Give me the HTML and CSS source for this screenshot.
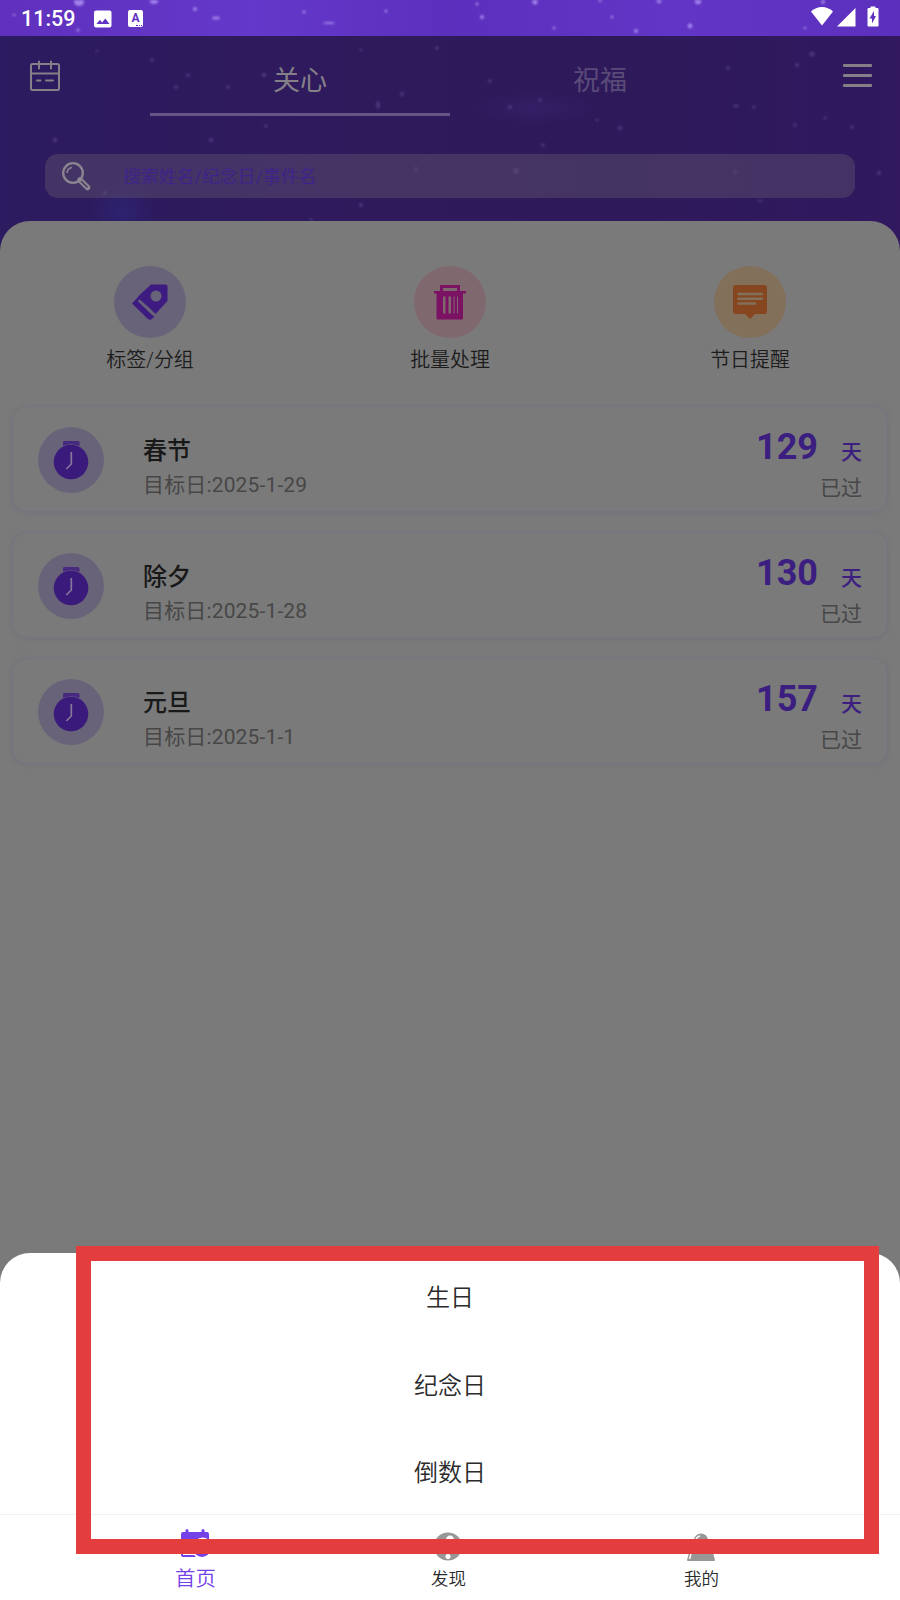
FILE: index.html
```
<!DOCTYPE html>
<html lang="zh-CN">
<head>
<meta charset="utf-8">
<title>首页</title>
<link rel="stylesheet" href="styles.css">
</head>
<body>
<div class="screen">
  <header class="hero">
    <svg class="stars" width="900" height="221" viewBox="0 0 900 221" aria-hidden="true">
      <g class="stars-bright">
        <ellipse cx="79" cy="2" rx="5" ry="4"/><ellipse cx="154" cy="1" rx="4" ry="3"/><circle cx="195" cy="9" r="2"/><ellipse cx="216" cy="18" rx="4" ry="1.6"/><circle cx="78" cy="30" r="1.6"/><circle cx="304" cy="12" r="1.6"/><circle cx="386" cy="11" r="1.6"/><ellipse cx="329" cy="23" rx="6" ry="1"/><circle cx="482" cy="17" r="2"/><circle cx="535" cy="2" r="2.6"/><circle cx="600" cy="0" r="2"/><circle cx="659" cy="1" r="2.4"/><circle cx="698" cy="1" r="3.2"/><circle cx="690" cy="26" r="2.4"/><circle cx="636" cy="31" r="2"/><circle cx="823" cy="2" r="2"/><circle cx="612" cy="17" r="1.4"/><circle cx="554" cy="28" r="1.4"/><circle cx="805" cy="28" r="1.3"/><circle cx="14" cy="15" r="1.3"/><circle cx="477" cy="4" r="1.5"/>
      </g>
      <g class="stars-dim">
        <circle cx="188" cy="75" r="2"/><circle cx="264" cy="75" r="2.4"/><circle cx="176" cy="87" r="2"/><circle cx="228" cy="87" r="2"/><circle cx="152" cy="60" r="2"/><circle cx="97" cy="51" r="1.6"/><circle cx="402" cy="94" r="2.2"/><ellipse cx="378" cy="105" rx="2" ry="4"/><circle cx="55" cy="140" r="2.4"/><circle cx="211" cy="140" r="2.2"/><circle cx="266" cy="126" r="2"/><circle cx="437" cy="48" r="2"/><circle cx="361" cy="50" r="1.6"/><circle cx="490" cy="81" r="2"/><circle cx="510" cy="107" r="2.2"/><circle cx="540" cy="100" r="2"/><circle cx="597" cy="120" r="1.6"/><circle cx="620" cy="128" r="2.2"/><circle cx="543" cy="145" r="2"/><circle cx="812" cy="54" r="2.6"/><circle cx="797" cy="65" r="2.2"/><circle cx="728" cy="68" r="2"/><ellipse cx="736" cy="106" rx="3" ry="1.4"/><circle cx="754" cy="107" r="1.8"/><circle cx="795" cy="125" r="2"/><circle cx="825" cy="118" r="1.8"/><circle cx="852" cy="127" r="2"/><circle cx="516" cy="171" r="3"/><circle cx="735" cy="172" r="2"/><circle cx="879" cy="173" r="2.2"/><circle cx="416" cy="169" r="2"/><circle cx="361" cy="205" r="2.2"/><circle cx="105" cy="193" r="2"/><circle cx="760" cy="201" r="1.8"/><circle cx="311" cy="220" r="1.8"/>
      </g>
    </svg>
    <div class="status">
      <span class="clock">11:59</span>
      <svg class="s-img" width="18" height="18" viewBox="0 0 18 18"><path fill="#fff" fill-rule="evenodd" d="M2 0.500h13.500a2 2 0 0 1 2 2v13a2 2 0 0 1-2 2H2a2 2 0 0 1-2-2v-13a2 2 0 0 1 2-2zM2.500 14h13l-4.200-5.600-3.200 4.100-2.200-2.700z"/></svg>
      <span class="s-a"><b>A</b><i></i></span>
      <svg class="s-right" width="70" height="22" viewBox="0 0 70 22" fill="#fff"><path d="M1 5.500C7-.5 17-.5 23 5.500L12 19.500z"/><path d="M45.500 2v18.500H27z"/><path fill-rule="evenodd" d="M60.500 0.500h5V2h2q1 0 1 1v16.500q0 1-1 1h-9q-1 0-1-1V3q0-1 1-1h2zM64 5l-4.500 7.500h2.500V17.500l4-7.500h-2z"/></svg>
    </div>
    <nav class="topbar">
      <svg class="cal" width="32" height="32" viewBox="0 0 32 32" fill="none" stroke="#858087" stroke-width="2" stroke-linecap="round"><rect x="2" y="4" width="28" height="26" rx="1.500"/><path d="M2 13.500H30M10 1.500v7M22 1.500v7M8 20.500h3.500M17 20.500h7"/></svg>
      <div class="tabs"><span class="tab active">关心</span><span class="tab">祝福</span></div>
      <div class="burger"><i></i><i></i><i></i></div>
    </nav>
    <div class="search">
      <svg width="30" height="30" viewBox="0 0 30 30" fill="none" stroke="#8a8590"><circle cx="12" cy="12" r="9.800" stroke-width="2.300"/><path d="M6 12a6 6 0 0 1 5-5.500" stroke-width="1.600"/><path d="M19 19l7.500 7.500" stroke-width="5.500" stroke-linecap="round"/><path d="M20.500 20.500l5.500 5.500" stroke="#493b67" stroke-width="1.600" stroke-linecap="round"/></svg>
      <span>搜索姓名/纪念日/事件名</span>
    </div>
  </header>

  <main class="panel">
    <section class="actions">
      <div class="action">
        <span class="disc lilac"><svg width="38" height="38" viewBox="0 0 38 38"><path fill="#3d1b80" d="M20 1.500h14.500q2 0 2 2V18L24.500 31 7 13.500z"/><path fill="#3d1b80" d="M8 13l-7 7.500L17 36q2 1.500 4 0l2.500-3z"/><path d="M8.500 18L22.500 31.500" stroke="#696379" stroke-width="2.600" stroke-linecap="round"/><circle cx="25" cy="13" r="5.500" fill="#696379"/></svg></span>
        <span class="label">标签/分组</span>
      </div>
      <div class="action">
        <span class="disc rose"><svg width="34" height="36" viewBox="0 0 34 36"><path fill="#7b1263" fill-rule="evenodd" d="M7 1h20v6h6v2.500h-3V34q0 1.500-1.500 1.500h-24Q3.500 35.500 3.500 34V9.500H1V7h6zM10 4v3h14V4zM10 12.500v17h2.500v-17zm5.500 0v17H18v-17zm5 0v17h1v-17zm3.500 0v17h1v-17z"/></svg></span>
        <span class="label">批量处理</span>
      </div>
      <div class="action">
        <span class="disc amber"><svg width="36" height="36" viewBox="0 0 36 36"><path fill="#864720" d="M4 1h28q3 0 3 3v23q0 3-3 3H23l-5 5-5-5H4q-3 0-3-3V4q0-3 3-3z"/><path d="M6.500 10H30M6.500 14.800H30M6.500 19.500H23" stroke="#83705a" stroke-width="2.400" stroke-linecap="round"/></svg></span>
        <span class="label">节日提醒</span>
      </div>
    </section>

    <section class="cards">
      <article class="card">
        <span class="watch"><svg width="36" height="40" viewBox="0 0 36 40"><path fill="#472980" d="M11 1h14q1.500 0 1.500 1.500V6Q18 2.500 10 6V2.500Q10 1 11 1z"/><circle cx="18" cy="22" r="17.300" fill="#3a1a7b"/><path d="M18.300 12v12l-5 5" stroke="#84779b" stroke-width="1.700" fill="none"/></svg></span>
        <div class="info"><h3>春节</h3><p>目标日:2025-1-29</p></div>
        <div class="count"><div class="days"><b>129</b><span>天</span></div><p>已过</p></div>
      </article>
      <article class="card">
        <span class="watch"><svg width="36" height="40" viewBox="0 0 36 40"><path fill="#472980" d="M11 1h14q1.500 0 1.500 1.500V6Q18 2.500 10 6V2.500Q10 1 11 1z"/><circle cx="18" cy="22" r="17.300" fill="#3a1a7b"/><path d="M18.300 12v12l-5 5" stroke="#84779b" stroke-width="1.700" fill="none"/></svg></span>
        <div class="info"><h3>除夕</h3><p>目标日:2025-1-28</p></div>
        <div class="count"><div class="days"><b>130</b><span>天</span></div><p>已过</p></div>
      </article>
      <article class="card">
        <span class="watch"><svg width="36" height="40" viewBox="0 0 36 40"><path fill="#472980" d="M11 1h14q1.500 0 1.500 1.500V6Q18 2.500 10 6V2.500Q10 1 11 1z"/><circle cx="18" cy="22" r="17.300" fill="#3a1a7b"/><path d="M18.300 12v12l-5 5" stroke="#84779b" stroke-width="1.700" fill="none"/></svg></span>
        <div class="info"><h3>元旦</h3><p>目标日:2025-1-1</p></div>
        <div class="count"><div class="days"><b>157</b><span>天</span></div><p>已过</p></div>
      </article>
    </section>
  </main>

  <section class="sheet">
    <div class="options"><div>生日</div><div>纪念日</div><div>倒数日</div></div>
    <nav class="bottom">
      <div class="item on">
        <svg width="28" height="30" viewBox="0 0 28 30"><path fill="#7440e8" d="M2 3h2.500V1.500a1.500 1.500 0 0 1 3 0V3h13V1.500a1.500 1.500 0 0 1 3 0V3H26q2 0 2 2v5.500H0V5q0-2 2-2zM0 10h16v2H2v14h11l2 2H2q-2 0-2-2z"/><circle cx="21" cy="19.500" r="8.500" fill="#7440e8"/><path d="M15 12q6-5 12-1" stroke="#fff" stroke-width="1.500" fill="none"/></svg>
        <span>首页</span>
      </div>
      <div class="item">
        <svg width="28" height="30" viewBox="0 0 28 30"><circle cx="14" cy="14.500" r="14" fill="#979797"/><ellipse cx="16" cy="8" rx="4" ry="4.500" fill="#fff"/><circle cx="14" cy="24.500" r="2.500" fill="#fff"/></svg>
        <span>发现</span>
      </div>
      <div class="item">
        <svg width="28" height="30" viewBox="0 0 28 30"><circle cx="14" cy="8.500" r="7" fill="#979797"/><path fill="#979797" d="M0 28l2-7q3-6 12-6t12 6l2 7q0 1-1 1H1q-1 0-1-1z"/><path d="M9 9q0-4 4-5M2.500 27l1.500-5" stroke="#fff" stroke-width="1.500" fill="none"/></svg>
        <span>我的</span>
      </div>
    </nav>
  </section>
  <div class="frame"></div>
</div>
</body>
</html>
```
FILE: styles.css
```
* { box-sizing: border-box; margin: 0; padding: 0; }
body { font-family: Roboto, "Noto Sans CJK SC", sans-serif; background: #7a7a7a; }
.screen { position: relative; width: 900px; height: 1600px; overflow: hidden; display: flex; flex-direction: column; background: #7a7a7a; }
svg { display: block; flex: none; }

/* Header */
.hero { position: relative; height: 251px; margin-bottom: -30px; flex: none; background: radial-gradient(circle at 122px 212px, #2d2270 0, transparent 32px), radial-gradient(ellipse at 535px 108px, #341e66 0, transparent 60px), linear-gradient(90deg, #2c1b60, #2f1a5c 40%, #2e1a5b 70%, #31185f); }
.stars { position: absolute; left: 0; top: 0; z-index: 1; filter: blur(1px); }
.stars-bright { fill: #a083ea; }
.stars-dim { fill: #4a347b; }
.status { height: 36px; padding: 0 22px 0 21px; display: flex; align-items: center; background: linear-gradient(90deg, #6030bd, #6438ca 28%, #5d2fbd 50%, #6335c6 75%, #5c30bd); color: #fff; }
.status > * { position: relative; z-index: 2; }
.clock { width: 73px; padding-top: 2px; font-size: 21.500px; font-weight: 500; line-height: 36px; }
.s-img { margin-right: 16px; margin-top: 1px; }
.s-a { width: 15px; height: 17px; background: #fff; border-radius: 2px; color: #5f31c0; text-align: center; }
.s-a b { display: block; font-size: 12px; line-height: 16px; }
.s-a i { position: absolute; right: 1px; bottom: 1px; width: 6px; border-bottom: 1.500px dotted #5f31c0; }
.s-right { margin-left: auto; margin-right: -2px; margin-top: -2px; }
.topbar { position: relative; z-index: 2; height: 80px; display: flex; align-items: flex-start; padding: 0 28px 0 29px; }
.cal { margin-top: 24px; }
.tabs { display: flex; width: 600px; margin-left: 89px; }
.tab { width: 300px; height: 80px; padding-top: 25px; text-align: center; font-size: 27px; line-height: 40px; color: #594a78; }
.tab.active { color: #858087; border-bottom: 3px solid #675486; }
.burger { width: 29px; margin: 28px 0 0 auto; display: flex; flex-direction: column; gap: 7px; }
.burger i { height: 3px; background: #858087; border-radius: 1px; }
.search { position: relative; z-index: 2; margin: 38px 45px 0; height: 44px; border-radius: 13px; background: rgba(100, 88, 112, .42); display: flex; align-items: center; padding-left: 16px; gap: 32px; color: #3e238a; font-size: 17.900px; line-height: 26px; }
.search span { padding-top: 2px; }
.search svg { margin-top: -1px; }

/* Content */
.panel { position: relative; z-index: 3; flex: 1; background: #7a7a7a; border-radius: 30px 30px 0 0; padding-top: 45px; }
.actions { display: grid; grid-template-columns: repeat(3, 300px); height: 140px; }
.action { display: flex; flex-direction: column; align-items: center; }
.disc { width: 72px; height: 72px; border-radius: 50%; display: flex; align-items: center; justify-content: center; }
.lilac { background: #696379; }
.rose { background: #80686f; }
.amber { background: #83705a; }
.label { margin-top: 9px; font-size: 19.900px; font-weight: 350; line-height: 28px; color: #1c1c1c; }
.cards { display: flex; flex-direction: column; gap: 20px; padding: 0 12px; }
.card { height: 106px; border-radius: 15px; display: flex; padding: 1px 25px 0; background: #7a7a7a; border: 1px solid #757580; box-shadow: 0 1px 5px #73737c; }
.watch { width: 66px; height: 66px; margin-top: 19px; border-radius: 50%; background: #696379; display: flex; justify-content: center; padding-top: 13px; }
.info { margin-left: 39px; flex: 1; }
.info h3 { margin-top: 25px; font-size: 24px; font-weight: 500; line-height: 36px; color: #181818; }
.info p { font-size: 21px; line-height: 32px; letter-spacing: .150px; color: #474747; }
.count { text-align: right; }
.days { display: flex; justify-content: flex-end; align-items: baseline; height: 64px; padding-top: 16px; color: #3c1e80; }
.days b { font-size: 36px; line-height: 46px; margin-right: 23px; }
.days span { font-size: 21px; font-weight: 500; }
.count p { font-size: 21px; line-height: 32px; color: #474747; }

/* Bottom sheet */
.sheet { position: relative; z-index: 4; height: 347px; flex: none; background: #fff; border-radius: 30px 30px 0 0; }
.options { height: 262px; padding-top: 2px; display: flex; flex-direction: column; border-bottom: 1px solid #f1f1f1; }
.options div { height: 87.500px; flex: none; text-align: center; font-size: 24px; font-weight: 350; line-height: 87.500px; color: #2b2b2b; }
.bottom { display: flex; height: 85px; padding: 0 71px 0 69px; }
.bottom .item { width: 253px; display: flex; flex-direction: column; align-items: center; padding-top: 17px; color: #2b2b2b; font-size: 17.500px; font-weight: 350; }
.bottom .item.on { padding-top: 14px; color: #7440e8; font-size: 20.500px; }
.item svg { margin-left: -1px; }
.item span { line-height: 32px; margin-top: 1px; }
.item.on span { margin-top: 4px; }

/* Highlight rectangle over the menu */
.frame { position: absolute; z-index: 5; left: 76px; top: 1246px; width: 802.500px; height: 308px; border: 15px solid #e33d3e; }
```
